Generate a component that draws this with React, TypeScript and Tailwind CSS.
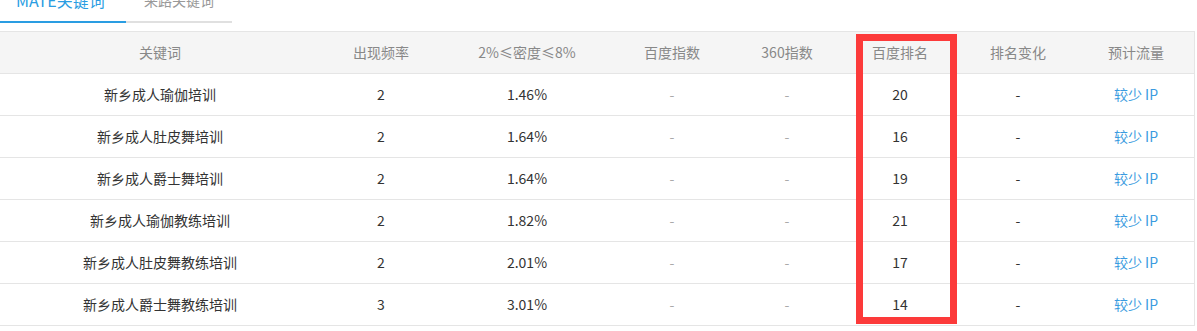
import React from "react";

const rows = [
  { k: "新乡成人瑜伽培训", f: "2", d: "1.46%", r: "20" },
  { k: "新乡成人肚皮舞培训", f: "2", d: "1.64%", r: "16" },
  { k: "新乡成人爵士舞培训", f: "2", d: "1.64%", r: "19" },
  { k: "新乡成人瑜伽教练培训", f: "2", d: "1.82%", r: "21" },
  { k: "新乡成人肚皮舞教练培训", f: "2", d: "2.01%", r: "17" },
  { k: "新乡成人爵士舞教练培训", f: "3", d: "3.01%", r: "14" },
];

const grid =
  "grid grid-cols-[320px_122px_170px_120px_110px_116px_120px_116px]";

const headers = ["关键词", "出现频率", "2%≤密度≤8%", "百度指数", "360指数", "百度排名", "排名变化", "预计流量"];

export default function App() {
  return (
    <div
      className="relative w-[1197px] h-[331px] overflow-hidden bg-white"
      style={{ fontFamily: '"Noto Sans CJK SC", "Noto Sans", sans-serif' }}
    >
      <div className="flex">
        <div className="w-[126px] -mt-[10px] pl-[16px] pb-[11px] border-b-2 border-[#2a9de2] text-[16px] leading-[20px] text-[#2a9de2] whitespace-nowrap">
          MATE关键词
        </div>
        <div className="w-[106px] -mt-[10px] pl-[18px] pb-[11px] border-b-2 border-[#e0e0e0] text-[14px] leading-[20px] text-[#999] whitespace-nowrap">
          来路关键词
        </div>
      </div>

      <div className="mt-[8px] w-[1195px] border-r border-[#e5e5e5]">
        <div className={`${grid} h-[43px] bg-[#f5f5f5] border-t border-b border-[#e5e5e5] text-[14px] text-[#888]`}>
          {headers.map((h) => (
            <div key={h} className="flex items-center justify-center">
              {h}
            </div>
          ))}
        </div>
        {rows.map((row) => (
          <div key={row.k} className={`${grid} h-[42px] border-b border-[#e5e5e5] text-[14px] text-[#333]`}>
            <div className="flex items-center justify-center">{row.k}</div>
            <div className="flex items-center justify-center">{row.f}</div>
            <div className="flex items-center justify-center">{row.d}</div>
            <div className="flex items-center justify-center text-[#aaa]">-</div>
            <div className="flex items-center justify-center text-[#aaa]">-</div>
            <div className="flex items-center justify-center">{row.r}</div>
            <div className="flex items-center justify-center">-</div>
            <div className="flex items-center justify-center text-[#3a9be0]">较少 IP</div>
          </div>
        ))}
      </div>

      <div className="absolute left-[856px] top-[34px] w-[101px] h-[290px] border-[7px] border-[#fc3a3a]" />
    </div>
  );
}
